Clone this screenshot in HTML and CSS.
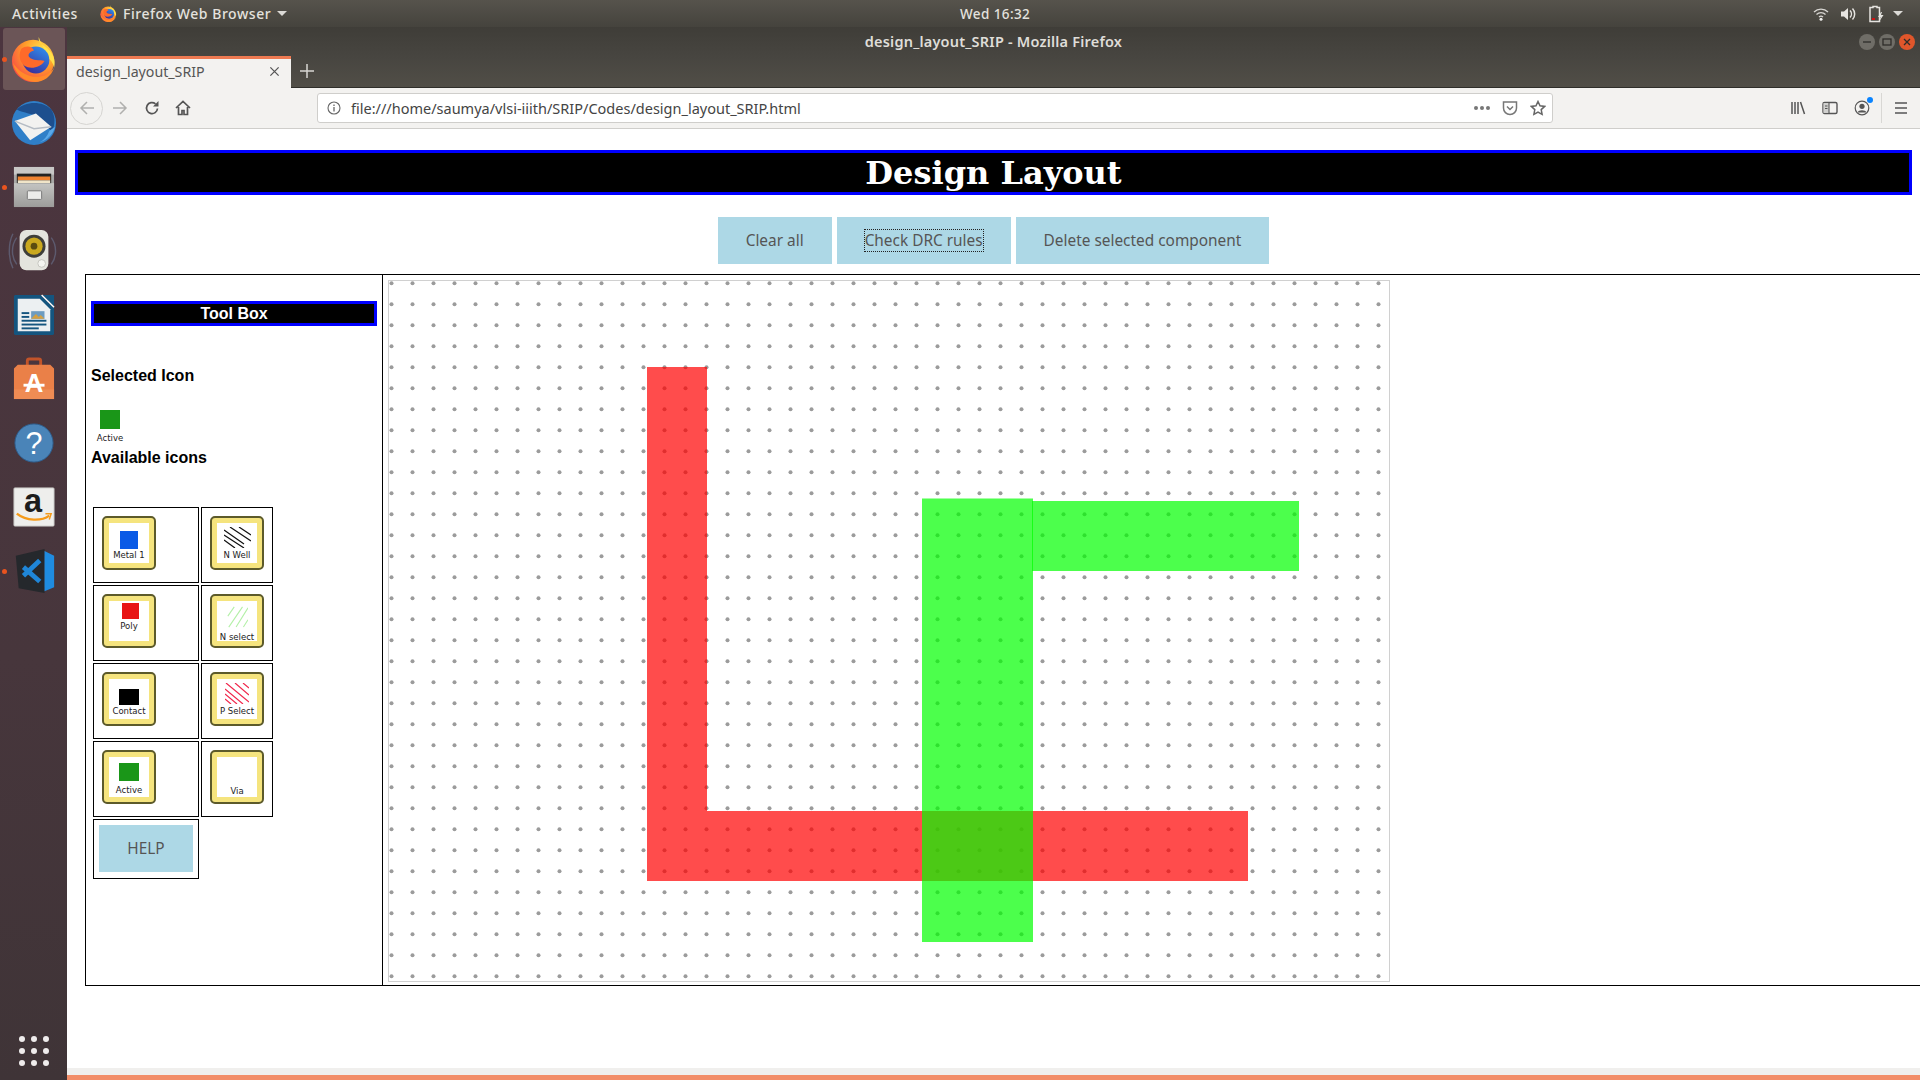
FILE: index.html
```html
<!DOCTYPE html>
<html lang="en">
<head>
    <meta charset="utf-8"/>
    <title>design_layout_SRIP</title>
    <link rel="stylesheet" href="styles.css">
</head>
<body>
    <svg class="defs" width="0" height="0">
        <defs>
            <radialGradient id="ff-outer" cx="0.7" cy="0.25" r="0.95">
                <stop offset="0" stop-color="#ffe14a"/>
                <stop offset="0.45" stop-color="#ff9a2a"/>
                <stop offset="1" stop-color="#f5314f"/>
            </radialGradient>
            <linearGradient id="ff-blue" x1="0.8" y1="0" x2="0.2" y2="1">
                <stop offset="0" stop-color="#2f8ff0"/>
                <stop offset="1" stop-color="#3a2a96"/>
            </linearGradient>
            <linearGradient id="drawer" x1="0" y1="0" x2="0" y2="1">
                <stop offset="0" stop-color="#c4c4c2"/>
                <stop offset="1" stop-color="#9c9c9a"/>
            </linearGradient>
            <symbol id="firefox" viewBox="0 0 48 48">
                <circle cx="23" cy="26" r="22" fill="url(#ff-outer)"/>
                <path d="M29 1C28 7 33 9 38 13C44 18 47 25 45 33C44 28 41 24 37 22C36 14 31 8 29 1Z" fill="#ffe14a"/>
                <circle cx="26" cy="25" r="14" fill="url(#ff-blue)"/>
                <path d="M11 13C15 10 22 10 24 15C20 16 17 19 19 22C22 26 30 25 35 26C31 33 20 35 14 31C8 26 8 18 11 13Z" fill="#ff6a2a"/>
                <path d="M2 28C4 40 14 48 25 48C34 48 42 42 45 33C40 41 30 44 21 42C12 40 6 34 2 28Z" fill="#ff8a2a"/>
            </symbol>
        </defs>
    </svg>

    <div class="panel">
        <div class="panel-left">
            <span class="activities">Activities</span>
            <span class="app-menu">
                <svg class="app-icon"><use href="#firefox"/></svg>
                Firefox Web Browser
                <i class="caret"></i>
            </span>
        </div>
        <div class="clock">Wed 16:32</div>
        <div class="tray">
            <svg class="tray-wifi" viewBox="0 0 16 14"><path d="M1 5a10 10 0 0 1 14 0M3.500 7.500a6.500 6.500 0 0 1 9 0M6 10a3 3 0 0 1 4 0" fill="none" stroke="#d8d6d2" stroke-width="1.300"/><circle cx="8" cy="12.300" r="1.500" fill="#f0efed"/></svg>
            <svg class="tray-vol" viewBox="0 0 16 14"><path d="M1 4.500h3L8 1v12L4 9.500H1Z" fill="#e6e4e0"/><path d="M10 3.500a5 5 0 0 1 0 7M12.500 1.500a8 8 0 0 1 0 11" fill="none" stroke="#e6e4e0" stroke-width="1.500"/></svg>
            <svg class="tray-batt" viewBox="0 0 16 18"><path d="M4 1.500h4v1h2.500v14H1v-14H4Z" fill="none" stroke="#e6e4e0" stroke-width="1.500"/><rect x="3" y="13" width="3" height="2" fill="#d01010"/><path d="M12 7l-3 5h2.500l-1 4 4-6h-2.500l1-3Z" fill="#e6e4e0"/></svg>
            <i class="caret"></i>
        </div>
    </div>

    <div class="desktop">
        <nav class="dock">
            <div class="dock-item active running">
                <svg class="dock-icon big"><use href="#firefox"/></svg>
            </div>
            <div class="dock-item">
                <svg class="dock-icon big" viewBox="0 0 48 48">
                    <circle cx="24" cy="24" r="23" fill="#2f7fc8"/>
                    <path d="M6 10C14 2 32 0 42 10C46 16 47 26 42 34C38 24 30 16 18 14C14 13 9 12 6 10Z" fill="#1d4f8e"/>
                    <path d="M4 22L26 14L42 28L20 42Z" fill="#f2f2f0"/>
                    <path d="M4 22L24 30L42 28" fill="none" stroke="#b5bcc4" stroke-width="1.500"/>
                    <path d="M30 44C38 42 44 36 46 28L40 32C38 38 34 42 30 44Z" fill="#5aa8e8"/>
                </svg>
            </div>
            <div class="dock-item running">
                <svg class="dock-icon" viewBox="0 0 44 44">
                    <rect x="1" y="1" width="42" height="42" rx="2" fill="#a8a8a6"/>
                    <rect x="1" y="1" width="42" height="8" fill="#c8c8c6"/>
                    <rect x="4" y="8" width="36" height="11" fill="#222"/>
                    <rect x="5" y="11" width="34" height="4" fill="#ee8230"/>
                    <rect x="5" y="15" width="34" height="3" fill="#f0e4c8"/>
                    <rect x="1" y="18" width="42" height="25" fill="url(#drawer)"/>
                    <rect x="15" y="26" width="15" height="9" rx="1" fill="#ececea" stroke="#777"/>
                </svg>
            </div>
            <div class="dock-item">
                <svg class="dock-icon big" viewBox="0 0 48 48">
                    <path d="M6 10C0 18 0 30 6 38M2 6C-3 16 -3 32 2 42M42 10C48 18 48 30 42 38" fill="none" stroke="#5d5a6e" stroke-width="1.500"/>
                    <rect x="9" y="2" width="30" height="42" rx="7" fill="#e4e4de"/>
                    <circle cx="24" cy="19" r="12" fill="#3e3e3a"/>
                    <circle cx="24" cy="19" r="9" fill="#c9a81e"/>
                    <circle cx="24" cy="19" r="3.500" fill="#5a4c10"/>
                    <circle cx="32" cy="37" r="4" fill="#f4f4f0" stroke="#c4c4be"/>
                </svg>
            </div>
            <div class="dock-item">
                <svg class="dock-icon" viewBox="0 0 44 44">
                    <path d="M2 1H29L43 15V41a2 2 0 0 1-2 2H3a2 2 0 0 1-2-2V2Z" fill="#14557f"/>
                    <path d="M31 1H43V13Z" fill="#14557f"/>
                    <path d="M5 5H28L39 16V39H5Z" fill="#ecf0f2"/>
                    <path d="M30 1L43 14" stroke="#fff" stroke-width="1.500"/>
                    <rect x="9" y="19" width="8" height="2" fill="#14557f"/>
                    <rect x="9" y="23" width="8" height="2" fill="#14557f"/>
                    <rect x="9" y="27" width="26" height="2" fill="#14557f"/>
                    <rect x="9" y="31" width="26" height="2" fill="#14557f"/>
                    <rect x="9" y="35" width="18" height="2" fill="#14557f"/>
                    <rect x="19" y="18" width="14" height="8" fill="#6d9cc0"/>
                    <path d="M19 26l5-5 3 3 2-2 4 4Z" fill="#d4a040"/>
                </svg>
            </div>
            <div class="dock-item">
                <svg class="dock-icon" viewBox="0 0 44 44">
                    <path d="M15 9V3a2 2 0 0 1 2-2h10a2 2 0 0 1 2 2v6" fill="none" stroke="#c2542a" stroke-width="3"/>
                    <path d="M5 7H39L43 11V43H1V11Z" fill="#ea8048"/>
                    <rect x="1" y="33" width="42" height="10" fill="#ef8c54"/>
                    <text class="bag-letter" x="22" y="36" text-anchor="middle">A</text>
                    <rect x="11" y="27" width="22" height="3" fill="#fff"/>
                </svg>
            </div>
            <div class="dock-item">
                <svg class="dock-icon" viewBox="0 0 44 44">
                    <circle cx="22" cy="22" r="20" fill="#4a84b8" stroke="#2d5c8c"/>
                    <text class="help-letter" x="22" y="33" text-anchor="middle">?</text>
                </svg>
            </div>
            <div class="dock-item">
                <svg class="dock-icon" viewBox="0 0 44 44">
                    <rect x="1" y="2" width="42" height="40" rx="1" fill="#eeeeec" stroke="#c9c9c7"/>
                    <text class="amazon-letter" x="21" y="27" text-anchor="middle">a</text>
                    <path d="M4 29C14 37 30 37 38 31" fill="none" stroke="#f59a1a" stroke-width="2.500"/>
                    <path d="M34 29L40 29L38 35" fill="none" stroke="#f59a1a" stroke-width="1.500"/>
                </svg>
            </div>
            <div class="dock-item running">
                <svg class="dock-icon big" viewBox="0 0 48 48">
                    <path d="M5 8L35 1V47L8 42Z" fill="#25282c"/>
                    <path d="M35 3L45 8V41L35 45Z" fill="#1f8ce0"/>
                    <path d="M30 13L13 29M13 20L30 35" fill="none" stroke="#1f86d8" stroke-width="5"/>
                </svg>
            </div>
            <div class="app-grid">
                <i></i><i></i><i></i>
                <i></i><i></i><i></i>
                <i></i><i></i><i></i>
            </div>
        </nav>

        <div class="window">
            <div class="titlebar">
                <div></div>
                <div class="window-title">design_layout_SRIP - Mozilla Firefox</div>
                <div class="window-buttons">
                    <span class="win-btn"><svg viewBox="0 0 16 16"><path d="M4 8h8" stroke="#2e2d2a" stroke-width="1.300"/></svg></span>
                    <span class="win-btn"><svg viewBox="0 0 16 16"><rect x="4" y="5" width="8" height="6" fill="none" stroke="#2e2d2a" stroke-width="1.300"/></svg></span>
                    <span class="win-btn close"><svg viewBox="0 0 16 16"><path d="M5 5l6 6M11 5l-6 6" stroke="#2e2d2a" stroke-width="1.300"/></svg></span>
                </div>
            </div>

            <div class="tabstrip">
                <div class="tab">
                    <span class="tab-name">design_layout_SRIP</span>
                    <svg class="tab-close" viewBox="0 0 12 12"><path d="M1.500 1.500l9 9M10.500 1.500l-9 9" stroke="#555" stroke-width="1.400"/></svg>
                </div>
                <svg class="new-tab" viewBox="0 0 14 14"><path d="M7 0v14M0 7h14" stroke="#d8d6d2" stroke-width="1.500"/></svg>
            </div>

            <div class="toolbar">
                <span class="nav-back">
                    <svg viewBox="0 0 16 16"><path d="M15 8H2M8 2L2 8l6 6" fill="none" stroke="#b0b0ae" stroke-width="1.500"/></svg>
                </span>
                <svg class="nav-icon forward" viewBox="0 0 16 16"><path d="M1 8h13M8 2l6 6-6 6" fill="none" stroke="#b0b0ae" stroke-width="1.500"/></svg>
                <svg class="nav-icon reload" viewBox="0 0 16 16"><path d="M13.500 8.500A5.500 5.500 0 1 1 11.500 3.800" fill="none" stroke="#555" stroke-width="1.700"/><path d="M14.500 1v5.500H9Z" fill="#555"/></svg>
                <svg class="nav-icon home" viewBox="0 0 16 16"><path d="M1 8L8 1.500 15 8M3.500 7v7.500h3.500v-4h2v4h3.500V7" fill="none" stroke="#555" stroke-width="1.700"/></svg>

                <div class="urlbar">
                    <svg class="url-info" viewBox="0 0 14 14"><circle cx="7" cy="7" r="6" fill="none" stroke="#666" stroke-width="1.100"/><path d="M7 6v4.500M7 3.500v1.500" stroke="#666" stroke-width="1.300"/></svg>
                    <span class="url-text">file:///home/saumya/vlsi-iiith/SRIP/Codes/design_layout_SRIP.html</span>
                    <span class="url-dots"><i></i><i></i><i></i></span>
                    <svg class="url-icon" viewBox="0 0 16 16"><path d="M1.500 2h13v6a6.500 6.500 0 0 1-13 0Z" fill="none" stroke="#777" stroke-width="1.500"/><path d="M5 6.500l3 3 3-3" fill="none" stroke="#777" stroke-width="1.500"/></svg>
                    <svg class="url-icon" viewBox="0 0 16 16"><path d="M8 1.500l2 4.300 4.700.6-3.500 3.200.9 4.700L8 12l-4.100 2.300.9-4.700L1.300 6.400 6 5.800Z" fill="none" stroke="#666" stroke-width="1.500"/></svg>
                </div>

                <div class="tools-right">
                    <svg class="tool library" viewBox="0 0 16 16"><path d="M2 2v12M5 2v12M8 2v12M10.500 2l4 12" fill="none" stroke="#555" stroke-width="1.500"/></svg>
                    <svg class="tool" viewBox="0 0 16 16"><rect x="1" y="2.500" width="14" height="11" rx="1.500" fill="none" stroke="#555" stroke-width="1.400"/><rect x="1.500" y="3" width="5.500" height="10" fill="#d0d0ce"/><path d="M7 2.500v11M3 6h2.500M3 8.500h2.500" stroke="#555" stroke-width="1.100"/></svg>
                    <span class="account">
                        <svg class="tool" viewBox="0 0 16 16"><circle cx="8" cy="8" r="6.800" fill="none" stroke="#555" stroke-width="1.200"/><circle cx="8" cy="6.300" r="2.600" fill="#555"/><path d="M3.500 12.500c1-3 8-3 9 0Z" fill="#555"/></svg>
                        <i class="badge"></i>
                    </span>
                    <span class="tool-sep"></span>
                    <svg class="tool menu" viewBox="0 0 16 16"><path d="M2 3h12M2 8h12M2 13h12" stroke="#555" stroke-width="1.600"/></svg>
                </div>
            </div>

            <main class="content">
                <h1 class="page-title">Design Layout</h1>
                <div class="actions">
                    <button class="btn">Clear all</button>
                    <button class="btn"><span class="focused">Check DRC rules</span></button>
                    <button class="btn">Delete selected component</button>
                </div>

                <div class="workspace">
                    <aside class="toolbox">
                        <h2 class="toolbox-title">Tool Box</h2>
                        <h3 class="sel-heading">Selected Icon</h3>
                        <div class="selected-icon">
                            <span class="swatch active-fill"></span>
                            <span class="tile-label">Active</span>
                        </div>
                        <h3 class="avail-heading">Available icons</h3>

                        <div class="icon-grid">
                            <div class="cell">
                                <div class="tile"><div class="tile-face">
                                    <span class="swatch metal"></span>
                                    <span class="tile-label">Metal 1</span>
                                </div></div>
                            </div>
                            <div class="cell">
                                <div class="tile"><div class="tile-face">
                                    <svg class="hatch nwell" viewBox="0 0 27 21"><path d="M0 3L20 17M0 8L20 21M0 13L11 21M6 0L27 14M15 0L27 8" stroke="#111" stroke-width="1.200"/></svg>
                                    <span class="tile-label">N Well</span>
                                </div></div>
                            </div>
                            <div class="cell">
                                <div class="tile"><div class="tile-face">
                                    <span class="swatch poly"></span>
                                    <span class="tile-label">Poly</span>
                                </div></div>
                            </div>
                            <div class="cell">
                                <div class="tile"><div class="tile-face">
                                    <svg class="hatch nselect" viewBox="0 0 24 22"><path d="M2 10L9 0M3 22L18 0M11 22L24 1M19 22L24 14" stroke="#b4f0a8" stroke-width="1.200"/></svg>
                                    <span class="tile-label">N select</span>
                                </div></div>
                            </div>
                            <div class="cell">
                                <div class="tile"><div class="tile-face">
                                    <span class="swatch contact"></span>
                                    <span class="tile-label">Contact</span>
                                </div></div>
                            </div>
                            <div class="cell">
                                <div class="tile"><div class="tile-face">
                                    <svg class="hatch pselect" viewBox="0 0 24 21"><path d="M0 6L18 21M0 11L12 21M0 16L6 21M1 0L24 19M10 0L24 12M18 0L24 5" stroke="#f0284c" stroke-width="1.200"/></svg>
                                    <span class="tile-label">P Select</span>
                                </div></div>
                            </div>
                            <div class="cell">
                                <div class="tile"><div class="tile-face">
                                    <span class="swatch active-tile"></span>
                                    <span class="tile-label">Active</span>
                                </div></div>
                            </div>
                            <div class="cell">
                                <div class="tile"><div class="tile-face">
                                    <span class="tile-label via">Via</span>
                                </div></div>
                            </div>
                            <div class="cell help-cell">
                                <button class="btn help">HELP</button>
                            </div>
                        </div>
                    </aside>

                    <div class="board">
                        <svg class="board-svg" width="1000" height="700" viewBox="0 0 1000 700">
                            <defs>
                                <pattern id="dots" width="21" height="21" patternUnits="userSpaceOnUse">
                                    <circle cx="2.500" cy="2.300" r="2" fill="#9b9b9b"/>
                                </pattern>
                            </defs>
                            <rect width="1000" height="700" fill="url(#dots)"/>
                            <rect class="poly-rect" x="258" y="86" width="60" height="514"/>
                            <rect class="poly-rect" x="318" y="530" width="541" height="70"/>
                            <rect class="diff-rect" x="533" y="217.500" width="111" height="443.500"/>
                            <rect class="diff-rect" x="643" y="220" width="267" height="70"/>
                        </svg>
                    </div>
                </div>
            </main>

            <div class="statusbar"></div>
        </div>
    </div>
</body>
</html>
```

FILE: styles.css
```css
* {
    box-sizing: border-box;
}
html, body {
    margin: 0;
    height: 100%;
    overflow: hidden;
}
body {
    font-family: "Noto Sans", "Liberation Sans", sans-serif;
    background: #fff;
    display: flex;
    flex-direction: column;
}
.defs {
    position: absolute;
}

/* top panel */
.panel {
    height: 27px;
    flex: none;
    display: grid;
    grid-template-columns: 960px auto 1fr;
    align-items: center;
    background: linear-gradient(#56534c, #45433d);
    color: #e4e2de;
    font-size: 14px;
    font-weight: 500;
    letter-spacing: 0.55px;
}
.panel-left {
    display: flex;
    align-items: center;
    padding-left: 12px;
}
.activities {
    width: 88px;
}
.app-menu {
    display: flex;
    align-items: center;
    gap: 6px;
}
.app-icon {
    width: 17px;
    height: 17px;
}
.caret {
    display: inline-block;
    width: 0;
    height: 0;
    border-left: 5px solid transparent;
    border-right: 5px solid transparent;
    border-top: 5px solid #dcdad6;
}
.clock {
    font-size: 13.500px;
    letter-spacing: 0.4px;
}
.tray {
    display: flex;
    align-items: center;
    padding-left: 783px;
}
.tray-wifi {
    width: 16px;
    height: 14px;
}
.tray-vol {
    width: 16px;
    height: 14px;
    margin-left: 11px;
}
.tray-batt {
    width: 16px;
    height: 18px;
    margin-left: 13px;
}
.tray .caret {
    margin-left: 8px;
}

.desktop {
    flex: 1;
    min-height: 0;
    display: flex;
}

/* launcher */
.dock {
    width: 67px;
    flex: none;
    display: flex;
    flex-direction: column;
    align-items: center;
    padding-top: 1px;
    background: linear-gradient(#4c353f, #47363c 60%, #3f3437);
}
.dock-item {
    width: 62px;
    height: 62px;
    margin-bottom: 2px;
    display: flex;
    align-items: center;
    justify-content: center;
    border-radius: 3px;
    flex: none;
    position: relative;
}
.dock-item.active {
    background: #6b5557;
}
.dock-item.running::before {
    content: "";
    position: absolute;
    left: -0.500px;
    top: 28.500px;
    width: 5px;
    height: 5px;
    border-radius: 50%;
    background: #e9541f;
}
.dock-icon {
    width: 42px;
    height: 42px;
    overflow: visible;
}
.dock-icon.big {
    width: 46px;
    height: 46px;
}
.bag-letter {
    font: bold 27px "Liberation Sans", sans-serif;
    fill: #fff;
}
.help-letter {
    font: 32px "Liberation Sans", sans-serif;
    fill: #fff;
}
.amazon-letter {
    font: bold 34px "Liberation Sans", sans-serif;
    fill: #1c1c1c;
}
.app-grid {
    margin-top: auto;
    margin-bottom: 14px;
    display: grid;
    grid-template-columns: repeat(3, 6px);
    gap: 6px;
}
.app-grid i {
    width: 6px;
    height: 6px;
    border-radius: 50%;
    background: #efecec;
}

.window {
    flex: 1;
    min-width: 0;
    display: flex;
    flex-direction: column;
}

/* title bar */
.titlebar {
    height: 29px;
    flex: none;
    display: grid;
    grid-template-columns: 1fr auto 1fr;
    align-items: center;
    background: linear-gradient(#3f3d38, #474540);
    color: #dfddd8;
}
.window-title {
    font-size: 14.500px;
    font-weight: 600;
    letter-spacing: 0.2px;
    padding-bottom: 2px;
}
.window-buttons {
    display: flex;
    justify-content: flex-end;
    gap: 4px;
    padding-right: 5px;
}
.win-btn {
    width: 16px;
    height: 16px;
    border-radius: 50%;
    background: #6f6d67;
    display: block;
}
.win-btn.close {
    background: #e0562b;
}
.win-btn svg {
    display: block;
}

/* tabs */
.tabstrip {
    height: 32px;
    flex: none;
    display: flex;
    background: linear-gradient(#474540, #514e47);
    border-bottom: 1px solid #2f2e2a;
    align-items: flex-start;
}
.tab {
    width: 224px;
    height: 32px;
    display: flex;
    align-items: center;
    justify-content: space-between;
    padding: 0 11px 4px 9px;
    background: #f3f2f0;
    border-top: 3px solid #ee7a52;
    color: #555;
    font-size: 14.200px;
}
.tab-close {
    width: 11px;
    height: 11px;
}
.new-tab {
    width: 14px;
    height: 14px;
    margin: 8px 0 0 9px;
}

/* toolbar */
.toolbar {
    height: 41px;
    flex: none;
    display: flex;
    align-items: center;
    background: #f3f2f0;
    border-bottom: 1px solid #cfcecb;
}
.nav-back {
    width: 33px;
    height: 33px;
    margin-left: 3px;
    border: 1px solid #d6d5d2;
    border-radius: 50%;
    display: flex;
    align-items: center;
    justify-content: center;
}
.nav-back svg {
    width: 16px;
    height: 16px;
}
.nav-icon {
    width: 16px;
    height: 16px;
}
.forward {
    margin-left: 9px;
}
.reload {
    margin-left: 16px;
}
.home {
    margin-left: 15px;
}
.urlbar {
    width: 1236px;
    height: 30px;
    margin-left: 126px;
    display: flex;
    align-items: center;
    background: #fff;
    border: 1px solid #cfcecb;
    border-radius: 3px;
    padding: 0 6px 0 9px;
}
.url-info {
    width: 14px;
    height: 14px;
}
.url-text {
    margin-left: 10px;
    font-size: 14.500px;
    color: #444;
}
.url-dots {
    margin-left: auto;
    display: flex;
    gap: 2px;
}
.url-dots i {
    width: 4px;
    height: 4px;
    border-radius: 50%;
    background: #777;
}
.url-icon {
    width: 16px;
    height: 16px;
    margin-left: 12px;
}
.tools-right {
    display: flex;
    align-items: center;
    padding-left: 237px;
}
.tool {
    width: 16px;
    height: 16px;
    display: block;
}
.tools-right > .tool,
.account {
    margin-left: 16px;
}
.tools-right > .library {
    margin-left: 0;
}
.account {
    position: relative;
    display: block;
    width: 16px;
    height: 16px;
}
.badge {
    position: absolute;
    top: -3px;
    right: -3px;
    width: 6px;
    height: 6px;
    border-radius: 50%;
    background: #0a84ff;
}
.tool-sep {
    width: 1px;
    height: 30px;
    background: #d8d7d4;
    margin-left: 11px;
}
.tools-right > .menu {
    margin-left: 11px;
}

/* page */
.content {
    flex: 1;
    min-height: 0;
    overflow: hidden;
    background: #fff;
}
.page-title {
    height: 45px;
    margin: 21px 8px 0 8px;
    background: #000;
    border: 3px solid #00f;
    color: #fff;
    font: bold 32px/40px "DejaVu Serif", serif;
    text-align: center;
}
.actions {
    display: flex;
    justify-content: center;
    gap: 5px;
    margin-top: 22px;
}
.btn {
    height: 47px;
    padding: 0 28px;
    border: none;
    background: #add8e6;
    color: #555;
    font-family: "Noto Sans", sans-serif;
    font-size: 15.400px;
}
.focused {
    outline: 1px dotted #222;
}
.workspace {
    display: flex;
    height: 712px;
    margin: 10px 0 0 18px;
    border: 1px solid #000;
    border-right: none;
}
.toolbox {
    width: 297px;
    flex: none;
    padding: 0 5px;
    border-right: 1px solid #000;
    font-family: "Liberation Sans", sans-serif;
}
.toolbox-title {
    height: 25px;
    margin: 26px 0 0 0;
    background: #000;
    border: 3px solid #00f;
    color: #fff;
    font-size: 16px;
    line-height: 19px;
    text-align: center;
}
.sel-heading,
.avail-heading {
    margin: 0;
    font-size: 16px;
    line-height: 18px;
}
.sel-heading {
    margin-top: 41px;
}
.selected-icon {
    width: 32px;
    height: 30px;
    margin: 25px 0 0 3px;
    display: flex;
    flex-direction: column;
    align-items: center;
}
.selected-icon .tile-label {
    margin-top: 3px;
}
.avail-heading {
    margin-top: 9px;
}
.swatch {
    display: block;
    flex: none;
}
.active-fill {
    width: 20px;
    height: 19px;
    background: #1a9618;
}
.icon-grid {
    display: grid;
    grid-template-columns: 106px 72px;
    grid-template-rows: repeat(4, 76px) 60px;
    gap: 2px;
    margin: 40px 0 0 2px;
}
.cell {
    border: 1px solid #000;
    padding: 8px;
}
.tile {
    width: 54px;
    height: 54px;
    padding: 5px;
    background: #f5e47e;
    border: 2px solid #5c5a2a;
    border-radius: 5px;
}
.tile-face {
    width: 40px;
    height: 40px;
    margin: 0;
    background: #fff;
    display: flex;
    flex-direction: column;
    align-items: center;
}
.tile-label {
    font: 8.500px/12px "DejaVu Sans", sans-serif;
    color: #222;
    white-space: nowrap;
}
.metal {
    width: 18px;
    height: 18px;
    margin-top: 8px;
    background: #0a5ae6;
}
.poly {
    width: 17px;
    height: 16px;
    margin: 2px 0 1px 3px;
    background: #e81414;
}
.contact {
    width: 20px;
    height: 16px;
    margin-top: 10px;
    background: #000;
}
.active-tile {
    width: 20px;
    height: 18px;
    margin: 6px 0 3px 0;
    background: #1a9618;
}
.hatch {
    display: block;
    flex: none;
}
.nwell {
    width: 27px;
    height: 21px;
    margin: 4px 0 1px 0;
}
.nselect {
    width: 22px;
    height: 22px;
    margin: 5px 0 3px 0;
}
.pselect {
    width: 24px;
    height: 21px;
    margin: 4px 0 1px 0;
}
.via {
    margin-top: 28px;
}
.help-cell {
    padding: 5px;
}
.btn.help {
    width: 94px;
    height: 47px;
    padding: 0;
}

/* drawing area */
.board {
    width: 1002px;
    height: 702px;
    margin: 5px 0 0 5px;
    border: 1px solid #d0d0d0;
}
.board-svg {
    display: block;
}
.poly-rect {
    fill: rgba(255, 0, 0, 0.7);
}
.diff-rect {
    fill: rgba(0, 255, 0, 0.7);
}

.statusbar {
    height: 12px;
    flex: none;
    background: #f0efed;
    border-bottom: 5px solid #f28d68;
}
```
